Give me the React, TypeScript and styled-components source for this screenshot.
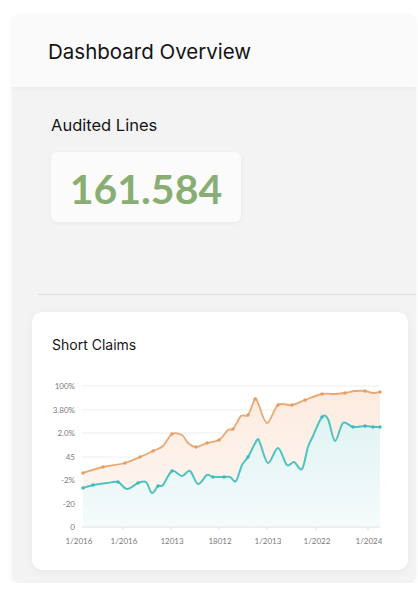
import styled, { createGlobalStyle } from "styled-components";

const GlobalStyle = createGlobalStyle`
  html, body {
    margin: 0;
    padding: 0;
    background: #ffffff;
    font-family: Inter, "Noto Sans", sans-serif;
    color: #1b1b1b;
  }
`;

const Panel = styled.div`
  margin: 15px 2px 0 12px;
  width: 404px;
  border-radius: 8px;
  overflow: hidden;
  background: #f3f3f3;
  box-shadow: 0 1px 6px rgba(0, 0, 0, 0.05);
`;

const Header = styled.div`
  height: 72px;
  display: flex;
  align-items: center;
  padding-left: 36px;
  background: #fafafa;
  box-shadow: 0 2px 4px rgba(0, 0, 0, 0.03);
`;

const HeaderTitle = styled.h1`
  margin: 0;
  font-size: 20.5px;
  font-weight: 400;
  color: #141414;
`;

const Body = styled.div`
  display: flex;
  flex-direction: column;
  padding: 28px 8px 13px 20px;
`;

const SectionLabel = styled.h2`
  margin: 0 0 17px 19px;
  font-size: 16.5px;
  line-height: 20px;
  font-weight: 400;
  color: #161616;
`;

const StatCard = styled.div`
  margin-left: 19px;
  width: 190px;
  height: 70px;
  display: flex;
  align-items: center;
  justify-content: center;
  background: #fbfbfb;
  border-radius: 6px;
  box-shadow: 0 1px 4px rgba(0, 0, 0, 0.05);
`;

const StatValue = styled.span`
  font-family: Lato, "Open Sans", sans-serif;
  font-size: 41px;
  font-weight: 700;
  color: #89ae73;
  margin-top: 2px;
`;

const Divider = styled.hr`
  margin: 72px -8px 17px 6px;
  border: none;
  border-top: 1px solid #dedede;
`;

const ChartCard = styled.div`
  width: 376px;
  box-sizing: border-box;
  padding: 24px 12px 20px 16px;
  background: #ffffff;
  border-radius: 10px;
  box-shadow: 0 2px 8px rgba(0, 0, 0, 0.05);
`;

const ChartTitle = styled.h3`
  margin: 0 0 21px 4px;
  font-size: 14px;
  line-height: 18px;
  font-weight: 400;
  color: #161616;
`;

const ChartSvg = styled.svg`
  display: block;
  font-family: Lato, "Open Sans", sans-serif;
`;

type Pt = [number, number];

const orange: Pt[] = [
  [83, 473], [103, 467], [125, 463], [140, 457], [153, 451], [163, 446],
  [172, 434], [182, 435], [188, 443], [196, 447], [207, 443], [219, 440],
  [228, 430], [233, 429], [241, 416], [248, 415], [255, 399], [258, 403],
  [267, 423], [278, 405], [292, 405], [305, 400], [322, 394], [335, 394],
  [345, 393], [355, 391], [365, 391], [373, 393], [380, 392],
];

const teal: Pt[] = [
  [83, 488], [93, 485], [107, 483], [118, 482], [127, 489], [138, 483],
  [146, 482], [152, 493], [158, 486], [163, 485], [172, 471], [182, 476],
  [190, 471], [198, 484], [207, 475], [213, 477], [224, 477], [230, 477],
  [236, 481], [242, 465], [248, 457], [257, 440], [260, 443], [268, 463],
  [278, 448], [287, 465], [294, 462], [302, 469], [308, 447], [313, 436],
  [322, 417], [328, 419], [335, 441], [343, 423], [353, 427], [365, 426],
  [373, 427], [380, 427],
];

const orangeDots: Pt[] = [
  [83, 473], [103, 467], [125, 463], [140, 457], [153, 451], [172, 434],
  [196, 447], [207, 443], [219, 440], [233, 429], [248, 415], [255, 399],
  [278, 405], [292, 405], [305, 400], [322, 394], [345, 393], [365, 391],
  [380, 392],
];

const tealDots: Pt[] = [
  [83, 488], [93, 485], [118, 482], [138, 483], [158, 486], [172, 471],
  [213, 477], [224, 477], [248, 457], [322, 417], [353, 427], [365, 426],
  [373, 427], [380, 427],
];

const yTicks = [
  { y: 386, label: "100%" },
  { y: 410, label: "3.80%" },
  { y: 433, label: "2.0%" },
  { y: 457, label: "45" },
  { y: 480, label: "-2%" },
  { y: 504, label: "-20" },
  { y: 527, label: "0" },
];

const xTicks = [
  { x: 79, label: "1/2016" },
  { x: 124, label: "1/2016" },
  { x: 172, label: "12013" },
  { x: 220, label: "18012" },
  { x: 268, label: "1/2013" },
  { x: 317, label: "1/2022" },
  { x: 369, label: "1/2024" },
];

// catmull-rom -> cubic bezier, light tension
const smooth = (pts: Pt[]) => {
  let d = `M${pts[0][0]},${pts[0][1]}`;
  for (let i = 0; i < pts.length - 1; i++) {
    const p0 = pts[i - 1] || pts[i];
    const p1 = pts[i];
    const p2 = pts[i + 1];
    const p3 = pts[i + 2] || p2;
    const t = 0.16;
    const c1x = p1[0] + (p2[0] - p0[0]) * t;
    const c1y = p1[1] + (p2[1] - p0[1]) * t;
    const c2x = p2[0] - (p3[0] - p1[0]) * t;
    const c2y = p2[1] - (p3[1] - p1[1]) * t;
    d += ` C${c1x.toFixed(1)},${c1y.toFixed(1)} ${c2x.toFixed(1)},${c2y.toFixed(1)} ${p2[0]},${p2[1]}`;
  }
  return d;
};

const area = (pts: Pt[], base: number) =>
  `${smooth(pts)} L${pts[pts.length - 1][0]},${base} L${pts[0][0]},${base} Z`;

const Chart = () => (
  <ChartSvg width={348} height={175} viewBox="48 375 348 175">
    <defs>
      <linearGradient id="orangeFill" x1="0" y1="0" x2="0" y2="1">
        <stop offset="0" stopColor="#fcebdf" />
        <stop offset="1" stopColor="#fef8f4" />
      </linearGradient>
      <linearGradient id="tealFill" x1="0" y1="0" x2="0" y2="1">
        <stop offset="0" stopColor="#e0f3f2" />
        <stop offset="1" stopColor="#f5fbfc" />
      </linearGradient>
    </defs>

    {yTicks.map((t) => (
      <g key={t.label}>
        <line x1={82} x2={380} y1={t.y} y2={t.y} stroke="#eeeeee" strokeWidth={1} />
        <text x={75} y={t.y + 3} textAnchor="end" fontSize={8} fill="#7a7a7a">
          {t.label}
        </text>
      </g>
    ))}

    <path d={area(orange, 527)} fill="url(#orangeFill)" />
    <path d={area(teal, 527)} fill="url(#tealFill)" />

    <path d={smooth(orange)} fill="none" stroke="#eaa872" strokeWidth={1.8} strokeLinejoin="round" />
    <path d={smooth(teal)} fill="none" stroke="#4ec3c2" strokeWidth={2} strokeLinejoin="round" />

    {orangeDots.map(([x, y], i) => (
      <circle key={`o${i}`} cx={x} cy={y} r={1.7} fill="#e49d63" />
    ))}
    {tealDots.map(([x, y], i) => (
      <circle key={`t${i}`} cx={x} cy={y} r={1.7} fill="#40b8b7" />
    ))}

    <line x1={82} x2={380} y1={527} y2={527} stroke="#e6e6e6" strokeWidth={1} />
    {xTicks.map((t, i) => (
      <g key={`x${i}`}>
        {i > 0 && <line x1={t.x - 1} x2={t.x - 1} y1={527} y2={530} stroke="#dddddd" />}
        <text x={t.x} y={544} textAnchor="middle" fontSize={8} fill="#7a7a7a">
          {t.label}
        </text>
      </g>
    ))}
  </ChartSvg>
);

export default function App() {
  return (
    <>
      <GlobalStyle />
      <Panel>
        <Header>
          <HeaderTitle>Dashboard Overview</HeaderTitle>
        </Header>
        <Body>
          <SectionLabel>Audited Lines</SectionLabel>
          <StatCard>
            <StatValue>161.584</StatValue>
          </StatCard>
          <Divider />
          <ChartCard>
            <ChartTitle>Short Claims</ChartTitle>
            <Chart />
          </ChartCard>
        </Body>
      </Panel>
    </>
  );
}
